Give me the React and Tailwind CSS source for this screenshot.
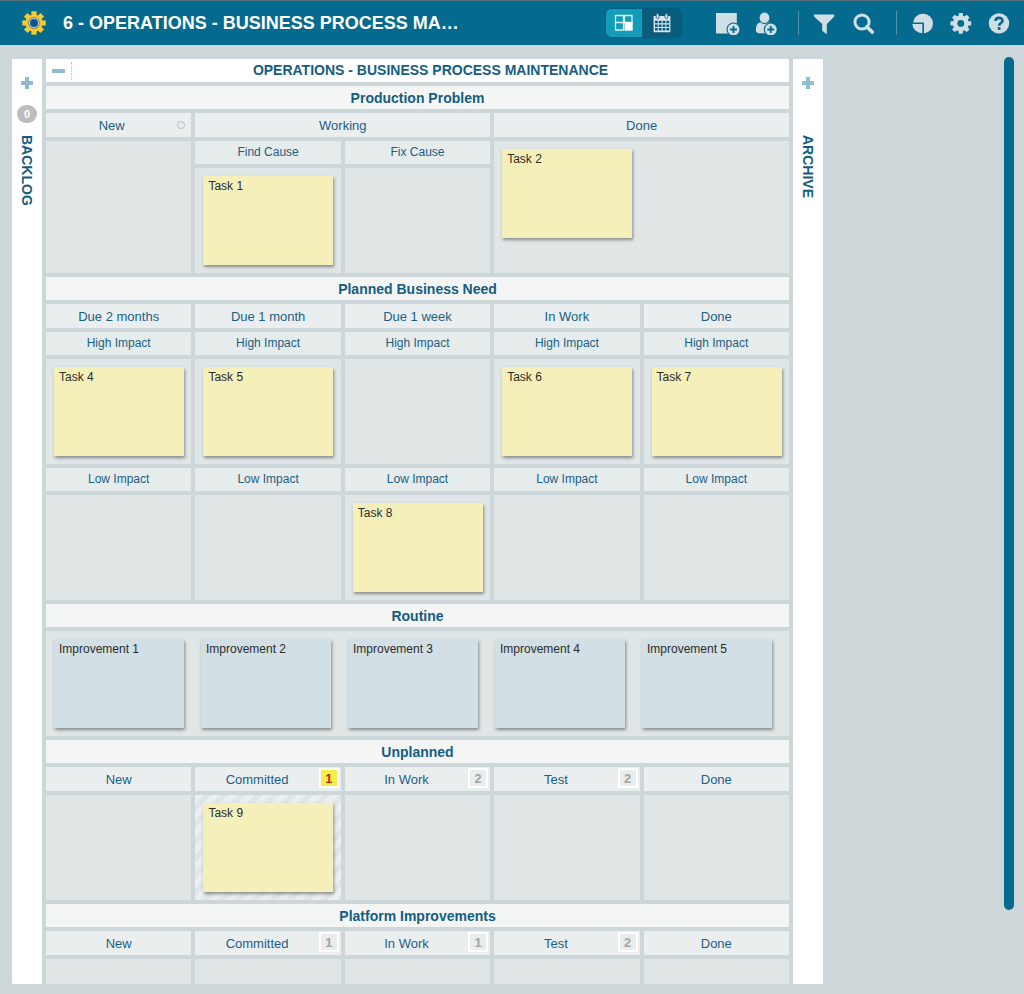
import React from "react";

const lanes = [
  {
    title: "Production Problem",
    columns: [
      { name: "New", span: 1, marker: true, cells: [{ cards: [] }] },
      {
        name: "Working",
        span: 2,
        children: [
          { name: "Find Cause", cards: ["Task 1"] },
          { name: "Fix Cause", cards: [] },
        ],
      },
      { name: "Done", span: 2, cells: [{ cards: ["Task 2"] }] },
    ],
  },
  {
    title: "Planned Business Need",
    columns: [
      { name: "Due 2 months", cells: [{ name: "High Impact", cards: ["Task 4"] }, { name: "Low Impact", cards: [] }] },
      { name: "Due 1 month", cells: [{ name: "High Impact", cards: ["Task 5"] }, { name: "Low Impact", cards: [] }] },
      { name: "Due 1 week", cells: [{ name: "High Impact", cards: [] }, { name: "Low Impact", cards: ["Task 8"] }] },
      { name: "In Work", cells: [{ name: "High Impact", cards: ["Task 6"] }, { name: "Low Impact", cards: [] }] },
      { name: "Done", cells: [{ name: "High Impact", cards: ["Task 7"] }, { name: "Low Impact", cards: [] }] },
    ],
  },
  {
    title: "Routine",
    cards: ["Improvement 1", "Improvement 2", "Improvement 3", "Improvement 4", "Improvement 5"],
  },
  {
    title: "Unplanned",
    columns: [
      { name: "New", cells: [{ cards: [] }] },
      { name: "Committed", limit: 1, full: true, cells: [{ cards: ["Task 9"] }] },
      { name: "In Work", limit: 2, cells: [{ cards: [] }] },
      { name: "Test", limit: 2, cells: [{ cards: [] }] },
      { name: "Done", cells: [{ cards: [] }] },
    ],
  },
  {
    title: "Platform Improvements",
    short: true,
    columns: [
      { name: "New", cells: [{ cards: [] }] },
      { name: "Committed", limit: 1, cells: [{ cards: [] }] },
      { name: "In Work", limit: 1, cells: [{ cards: [] }] },
      { name: "Test", limit: 2, cells: [{ cards: [] }] },
      { name: "Done", cells: [{ cards: [] }] },
    ],
  },
];

function Card({ text, blue }) {
  return (
    <article
      className={`h-[89px] w-[130px] shrink-0 px-[5px] py-0.5 text-xs leading-4 text-[#2c2c2c] shadow-[1px_2px_3px_rgba(0,0,0,0.4)] ${
        blue ? "bg-[#d2dfe4]" : "bg-[#f5f0ba]"
      }`}
    >
      {text}
    </article>
  );
}

function Cell({ cards, striped, short }) {
  return (
    <div
      className={`flex flex-1 p-2 ${short ? "min-h-[25px]" : "min-h-[105px]"} ${
        striped
          ? "bg-[repeating-linear-gradient(135deg,#ebefef_0px,#ebefef_6px,#e0e6e6_6px,#e0e6e6_12px)]"
          : "bg-[#e0e6e6]"
      }`}
    >
      {cards.map((c) => (
        <Card key={c} text={c} />
      ))}
    </div>
  );
}

function SubLabel({ children }) {
  return (
    <h4 className="h-[23px] shrink-0 bg-[#e6ebeb] text-center text-xs leading-[23px] text-[#1a5f85]">{children}</h4>
  );
}

function ColumnLabel({ name, limit, full, marker }) {
  return (
    <div className="flex h-6 shrink-0 items-start bg-[#eaeeee] text-[13px] text-[#1a5f85]">
      <h3 className="flex-1 text-center leading-[25px]">{name}</h3>
      {marker && <span className="mr-1.5 mt-2 size-2 rounded-full border border-[#a9c6c6]" />}
      {limit && (
        <span
          className={`mr-0.5 mt-px flex h-5 w-5 items-center justify-center border-2 border-white text-[13px] font-bold leading-none ${
            full ? "bg-[#f3ee4a] text-[#c9261f]" : "bg-[#e9eded] text-[#a3a3a3]"
          }`}
        >
          {limit}
        </span>
      )}
    </div>
  );
}

function Column({ column, short }) {
  return (
    <div className={`flex flex-col gap-1 ${column.span === 2 ? "col-span-2" : ""}`}>
      <ColumnLabel {...column} />
      {column.children && (
        <div className="grid flex-1 grid-cols-2 gap-1">
          {column.children.map((child) => (
            <div key={child.name} className="flex flex-col gap-1">
              <SubLabel>{child.name}</SubLabel>
              <Cell cards={child.cards} />
            </div>
          ))}
        </div>
      )}
      {column.cells &&
        column.cells.map((cell, i) => (
          <React.Fragment key={i}>
            {cell.name && <SubLabel>{cell.name}</SubLabel>}
            <Cell cards={cell.cards} striped={column.full} short={short} />
          </React.Fragment>
        ))}
    </div>
  );
}

function Lane({ lane }) {
  return (
    <section className={`flex flex-col gap-1 ${lane.short ? "flex-1" : ""}`}>
      <h2 className="h-[23px] bg-[#f4f6f6] text-center text-sm font-bold leading-[25px] text-[#155d80]">{lane.title}</h2>
      {lane.cards && (
        <div className="flex min-h-[105px] gap-[17px] bg-[#e0e6e6] p-2">
          {lane.cards.map((c) => (
            <Card key={c} text={c} blue />
          ))}
        </div>
      )}
      {lane.columns && (
        <div className="grid flex-1 grid-cols-5 gap-1">
          {lane.columns.map((column) => (
            <Column key={column.name} column={column} short={lane.short} />
          ))}
        </div>
      )}
    </section>
  );
}

function Plus() {
  return (
    <svg viewBox="0 0 12 12" className="size-3" fill="#8fbdd0" aria-hidden="true">
      <path d="M4 0h4v4h4v4H8v4H4V8H0V4h4z" />
    </svg>
  );
}

function SideColumn({ name, count }) {
  return (
    <aside className="flex w-[30px] shrink-0 flex-col items-center bg-white pt-[18px]">
      <button type="button" aria-label={`Expand ${name}`}>
        <Plus />
      </button>
      <div className="mt-4 flex h-[18px] w-full justify-center">
        {count !== undefined && (
          <span className="flex w-5 items-center justify-center rounded-full bg-[#bdbdbd] text-[11px] font-bold text-white">
            {count}
          </span>
        )}
      </div>
      <h2 className="mt-3 text-sm font-bold leading-4 text-[#155d80] [writing-mode:vertical-rl]">{name}</h2>
    </aside>
  );
}

function Logo() {
  return (
    <svg viewBox="-12 -12 24 24" className="size-6 shrink-0" aria-hidden="true">
      <g fill="#f6c92c">
        <circle r="8.6" />
        {[0, 45, 90, 135, 180, 225, 270, 315].map((a) => (
          <rect key={a} x="-2.6" y="-11.7" width="5.2" height="5" transform={`rotate(${a})`} />
        ))}
      </g>
      <circle r="5.7" fill="#2f6f94" />
      <circle r="5" fill="#c9d9df" />
      <circle r="4" fill="#0e5793" />
    </svg>
  );
}

function Icon({ children }) {
  return (
    <svg viewBox="0 0 24 24" className="size-6" fill="#d0dfe6" aria-hidden="true">
      {children}
    </svg>
  );
}

function PlusBadge({ cx, cy }) {
  return (
    <>
      <circle cx={cx} cy={cy} r="7" fill="#046a8e" />
      <circle cx={cx} cy={cy} r="5.9" />
      <path d={`M${cx - 3.4} ${cy}h6.8M${cx} ${cy - 3.4}v6.8`} stroke="#046a8e" strokeWidth="1.8" />
    </>
  );
}

function IconButton({ label, children }) {
  return (
    <button type="button" aria-label={label} className="size-6 shrink-0">
      <Icon>{children}</Icon>
    </button>
  );
}

function Header() {
  return (
    <header className="flex h-[45px] items-center border-t border-[#56707c] bg-[#046a8e] pl-[22px] pr-[13px]">
      <Logo />
      <h1 className="ml-[17px] min-w-0 flex-1 truncate text-lg font-bold text-white">
        6 - OPERATIONS - BUSINESS PROCESS MA…
      </h1>
      <div className="flex h-7 w-[75px] shrink-0 overflow-hidden rounded-[5px] bg-[#0a5c7d] shadow-[0_0_2px_rgba(0,50,75,0.6)]">
        <button type="button" aria-label="Board view" className="flex w-9 items-center justify-center bg-[#139cb7]">
          <svg viewBox="0 0 20 18" className="h-[18px] w-5" aria-hidden="true">
            <path
              d="M1.5 1.5h8v7h-8zM10.5 1.5h7.5v7h-7.5zM1.5 8.5h8v7.5h-8z"
              fill="none"
              stroke="#dbf0f4"
              strokeWidth="1.3"
            />
            <rect x="10.5" y="8" width="8.2" height="8.7" fill="#fff" />
          </svg>
        </button>
        <button type="button" aria-label="Calendar view" className="flex flex-1 items-center justify-center">
          <svg viewBox="0 0 18 20" className="h-5 w-[18px]" aria-hidden="true">
            <rect x="0.6" y="3" width="16.8" height="16.2" rx="0.6" fill="#d6e6ec" />
            <path
              d="M2 7.8h2.8v2.5H2zM5.8 7.8h2.8v2.5H5.8zM9.6 7.8h2.8v2.5H9.6zM13.4 7.8h2.8v2.5h-2.8zM2 11.4h2.8v2.5H2zM5.8 11.4h2.8v2.5H5.8zM9.6 11.4h2.8v2.5H9.6zM13.4 11.4h2.8v2.5h-2.8zM2 15h2.8v2.6H2zM5.8 15h2.8v2.6H5.8zM9.6 15h2.8v2.6H9.6zM13.4 15h2.8v2.6h-2.8z"
              fill="#0a5c7d"
            />
            <g fill="#d6e6ec" stroke="#0a5c7d" strokeWidth="0.8">
              <rect x="3.2" y="0.6" width="2.8" height="5" rx="1.4" />
              <rect x="12" y="0.6" width="2.8" height="5" rx="1.4" />
            </g>
          </svg>
        </button>
      </div>
      <div className="ml-[35px] flex gap-[15px]">
        <IconButton label="Add card">
          <path d="M0 2h20.8v20.5H0z" />
          <PlusBadge cx={17.5} cy={18.5} />
        </IconButton>
        <IconButton label="Add user">
          <ellipse cx="9.5" cy="6.7" rx="4.9" ry="5.3" />
          <path d="M5.4 11.2Q9.5 15 13.6 11.2Q18.3 12 18.6 22.2H3.2Q.8 21.8.8 19.2Q1 11.6 5.4 11.2z" />
          <PlusBadge cx={15.8} cy={18.5} />
        </IconButton>
      </div>
      <span className="ml-[19px] mr-[13px] h-6 w-px shrink-0 bg-[#4b93ae]" />
      <div className="flex gap-4">
        <IconButton label="Filter">
          <path d="M2 3.6h20.3v1.8L14.8 13v10.2l-4.6-3.4V13L2 5.4z" />
        </IconButton>
        <IconButton label="Search">
          <circle cx="10" cy="11" r="7.1" fill="none" stroke="#d0dfe6" strokeWidth="3" />
          <path d="M15 16l5.2 5" stroke="#d0dfe6" strokeWidth="3.8" strokeLinecap="round" />
        </IconButton>
      </div>
      <span className="ml-5 mr-[14px] h-6 w-px shrink-0 bg-[#4b93ae]" />
      <div className="flex gap-[14px]">
        <IconButton label="Reports">
          <path d="M2.2 11.6A9.9 9.9 0 1 1 13 22.4V11.6z" />
          <path d="M1.3 13.1h10v9.1A10 10 0 0 1 1.3 13.1z" />
        </IconButton>
        <IconButton label="Settings">
          <circle cx="11.8" cy="12.4" r="7.9" />
          {[0, 45, 90, 135, 180, 225, 270, 315].map((a) => (
            <path key={a} d="M9.4 5.4L9.9 2h3.8L14.2 5.4z" transform={`rotate(${a} 11.8 12.4)`} />
          ))}
          <circle cx="11.8" cy="12.4" r="3.4" fill="#046a8e" />
        </IconButton>
        <IconButton label="Help">
          <circle cx="12" cy="12.4" r="10.2" />
          <path
            d="M8.6 10C8.6 5.8 15.5 5.8 15.5 9.7C15.5 12.1 12.1 12 12.1 14.8"
            fill="none"
            stroke="#046a8e"
            strokeWidth="2.7"
          />
          <rect x="10.7" y="16.1" width="2.8" height="2.8" fill="#046a8e" />
        </IconButton>
      </div>
    </header>
  );
}

export default function App() {
  return (
    <div className="flex min-h-screen flex-col bg-[#cdd6d8] font-['Liberation_Sans',Arial,sans-serif]">
      <Header />
      <main className="flex flex-1 justify-between pb-2.5 pl-3 pr-2.5 pt-3">
        <div className="mt-0.5 flex w-4/5 min-w-[811px] gap-1">
          <SideColumn name="BACKLOG" count={0} />
          <div className="flex min-w-0 flex-1 flex-col gap-1">
            <div className="flex h-[23px] items-center bg-white">
              <button type="button" aria-label="Collapse lane" className="flex h-[18px] w-[26px] items-center border-r border-dotted border-[#b5bfc2] pl-1.5">
                <span className="h-1 w-[13px] bg-[#8fbdd0]" />
              </button>
              <h2 className="flex-1 text-center text-sm font-bold leading-[25px] text-[#155d80]">
                OPERATIONS - BUSINESS PROCESS MAINTENANCE
              </h2>
            </div>
            {lanes.map((lane) => (
              <Lane key={lane.title} lane={lane} />
            ))}
          </div>
          <SideColumn name="ARCHIVE" />
        </div>
        <div className="w-2.5 shrink-0">
          <div className="h-[92%] rounded-full bg-[#046a8e]" />
        </div>
      </main>
    </div>
  );
}
